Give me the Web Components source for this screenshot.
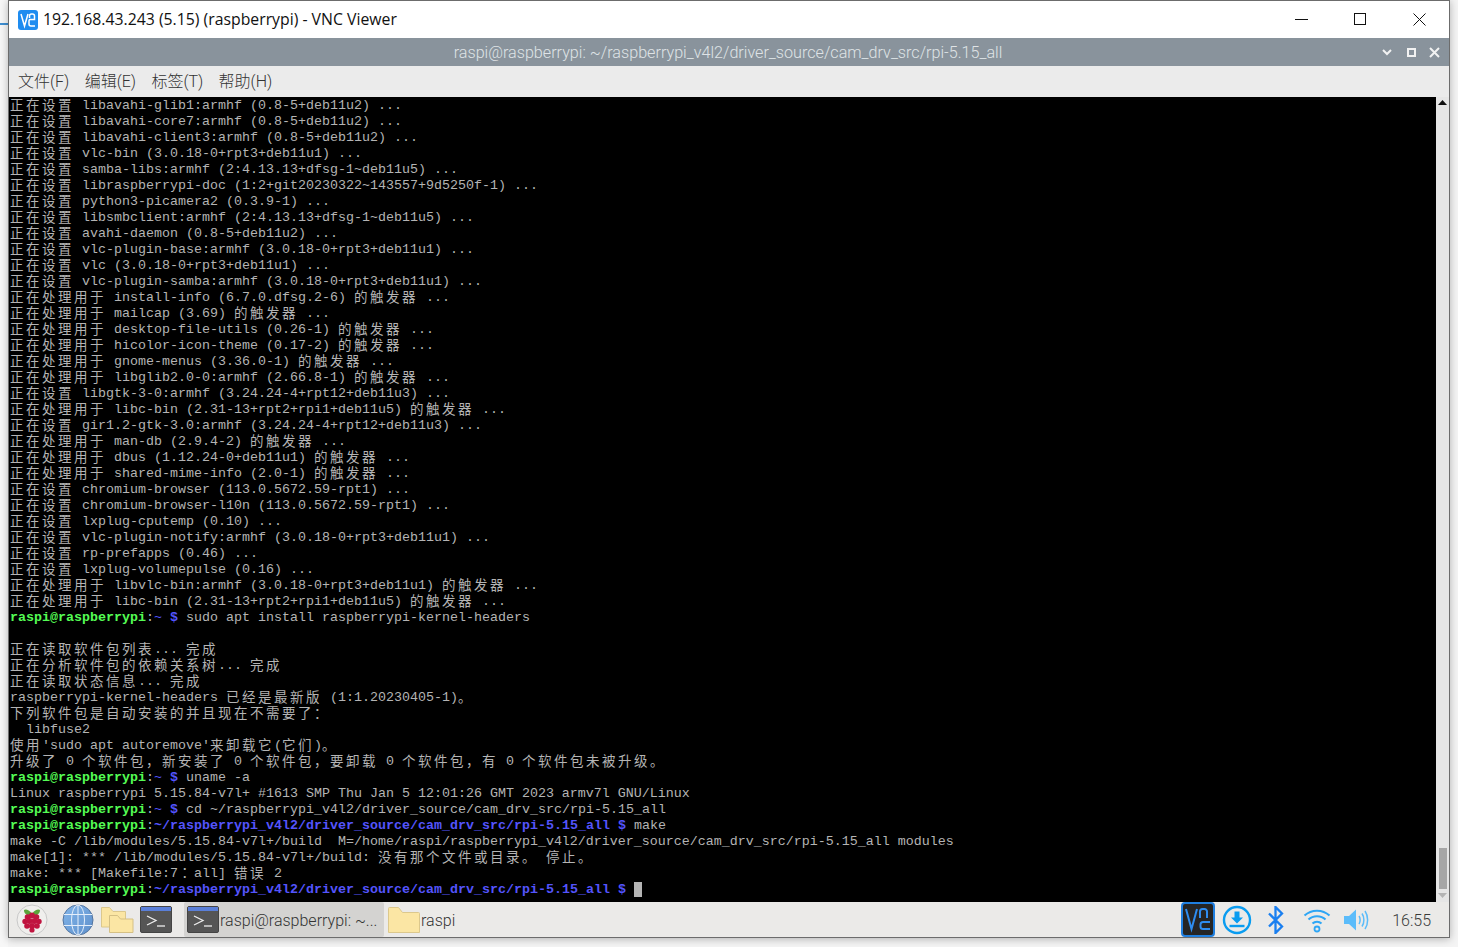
<!DOCTYPE html>
<html lang="zh">
<head>
<meta charset="utf-8">
<title>VNC Viewer</title>
<style>
  html, body { margin: 0; height: 947px; overflow: hidden; }
  html { background: #f4f4f4; }
  body {
    display: flex;
    background: linear-gradient(#f7f7f7 0 23px, #3f8fd2 23px 25px, #f7f7f7 25px) left top / 8px 100% no-repeat;
  }
</style>
</head>
<body>
<vnc-window>
  <vnc-titlebar slot="title">192.168.43.243 (5.15) (raspberrypi) - VNC Viewer</vnc-titlebar>
  <term-titlebar slot="title">raspi@raspberrypi: ~/raspberrypi_v4l2/driver_source/cam_drv_src/rpi-5.15_all</term-titlebar>
  <menu-bar slot="title"></menu-bar>
  <term-view></term-view>
  <task-bar slot="footer"></task-bar>
</vnc-window>

<script>
(function () {

  // svg shared by the panel, same icon shows up more than once
  const icons = {
    terminal: `<svg width="32" height="27" viewBox="0 0 32 27">
      <rect x=".5" y=".5" width="31" height="26" rx="1.5" fill="#555" stroke="#444"/>
      <rect x="1" y="1" width="30" height="4" fill="#5a7fd8"/>
      <path d="M7 10l9 4.5-9 4.500" fill="none" stroke="#eee" stroke-width="1.300"/>
      <path d="M17 20h8" stroke="#eee" stroke-width="1.300"/>
    </svg>`,
    folder: `<svg width="32" height="26" viewBox="0 0 32 26">
      <path d="M.5 25.500V1.500a1 1 0 0 1 1-1h9l4 5h16a1 1 0 0 1 1 1v19z" fill="#fbe6a4" stroke="#dcc88c"/>
    </svg>`,
    folders: `<svg width="33" height="27" viewBox="0 0 33 27">
      <path d="M.5 21V1.500h8l3.500 4h12.500V21z" fill="#fbe6a4" stroke="#dcc88c"/>
      <path d="M8.500 26.500V9.500h8l3 3.500h12.500v13.500z" fill="#fbe6a4" stroke="#d5c084"/>
    </svg>`,
    raspberry: `<svg width="32" height="32" viewBox="0 0 32 32">
      <circle cx="16" cy="16" r="15" fill="#f0efed" stroke="#c9c9c9"/>
      <path d="M16 10C13 5 9 5 8 6c0 4 3 6 8 5zM16 10c3-5 7-5 8-4 0 4-3 6-8 5z" fill="#5ca33a"/>
      <g fill="#c0143f">
        <circle cx="16" cy="11.500" r="3"/><circle cx="11.500" cy="13" r="2.800"/><circle cx="20.500" cy="13" r="2.800"/>
        <circle cx="9" cy="17.500" r="2.700"/><circle cx="23" cy="17.500" r="2.700"/><circle cx="13.500" cy="17" r="2.900"/>
        <circle cx="18.500" cy="17" r="2.900"/><circle cx="11" cy="22" r="2.800"/><circle cx="21" cy="22" r="2.800"/>
        <circle cx="16" cy="22" r="3"/><circle cx="16" cy="26" r="2.600"/>
      </g>
    </svg>`,
    globe: `<svg width="32" height="32" viewBox="0 0 32 32">
      <defs><linearGradient id="g" x1="0" y1="0" x2="1" y2="1"><stop offset="0" stop-color="#82b6ea"/><stop offset="1" stop-color="#5e8fcb"/></linearGradient></defs>
      <circle cx="16" cy="16" r="15" fill="url(#g)" stroke="#54759f"/>
      <g fill="none" stroke="#e4eefa" stroke-width="1">
        <ellipse cx="16" cy="16" rx="6.500" ry="15"/>
        <path d="M16 1v30M2 10.500h28M2 21.500h28"/>
      </g>
    </svg>`,
    vnc: `<svg width="34" height="35" viewBox="0 0 34 35">
      <rect x="1" y="1" width="32" height="33" rx="3" fill="#252525" stroke="#1f7fe0" stroke-width="2"/>
      <g fill="none" stroke="#2e8df0" stroke-width="2">
        <path d="M5 7l5.500 20L16 7"/>
        <path d="M19 16V9.500a2.500 2.500 0 0 1 2.500-2.500h2a2.500 2.500 0 0 1 2.500 2.500V16"/>
        <path d="M29 20h-7a2.500 2.500 0 0 0-2.500 2.500v2a2.500 2.500 0 0 0 2.500 2.500h7"/>
      </g>
    </svg>`,
    download: `<svg width="30" height="30" viewBox="0 0 30 30">
      <circle cx="15" cy="15" r="13" fill="none" stroke="#0a9cf0" stroke-width="2.400"/>
      <path d="M12.500 6.500h5v6h3.500L15 18.500 9 12.500h3.500z" fill="#0a9cf0"/>
      <path d="M7.500 21h15" stroke="#0a9cf0" stroke-width="2.400"/>
    </svg>`,
    bluetooth: `<svg width="18" height="28" viewBox="0 0 18 28">
      <path d="M2 7.500l13 13L8.500 27V1L15 7.500l-13 13" fill="none" stroke="#1a7ff0" stroke-width="2.300"/>
    </svg>`,
    wifi: `<svg width="28" height="26" viewBox="0 0 28 26">
      <g fill="none" stroke="#2ea6f5" stroke-width="2">
        <path d="M1.500 8.500c7-6.500 18-6.500 25 0"/>
        <path d="M5.500 12.500c4.500-4.500 12.500-4.500 17 0"/>
        <path d="M9.500 16.500c2.500-2.500 6.500-2.500 9 0"/>
        <circle cx="14" cy="22" r="2.500" stroke-width="1.800"/>
      </g>
    </svg>`,
    volume: `<svg width="28" height="26" viewBox="0 0 28 26">
      <path d="M1 9h5l7-6.500v21L6 17H1z" fill="#5bbcfa"/>
      <g fill="none" stroke="#5bbcfa" stroke-width="1.500">
        <path d="M16 9c1.500 2 1.500 6 0 8"/><path d="M19 6.500c2.500 3.500 2.500 9.500 0 13"/><path d="M22 4c3.500 5 3.500 13 0 18"/>
      </g>
    </svg>`
  };

  class VncWindow extends HTMLElement {
    constructor() {
      super();
      this.attachShadow({ mode: 'open' }).innerHTML = `
        <style>
          :host {
            display: flex;
            flex-direction: column;
            box-sizing: border-box;
            width: 1442px;
            height: 938px;
            margin-left: 8px;
            border: 1px solid #6c6c6c;
            background: #ebebeb;
            box-shadow: 0 1px 8px rgba(0,0,0,.28);
          }
          .main { flex: 1; min-height: 0; display: flex; }
        </style>
        <slot name="title"></slot>
        <div class="main"><slot></slot></div>
        <slot name="footer"></slot>`;
    }
  }

  class VncTitlebar extends HTMLElement {
    constructor() {
      super();
      this.attachShadow({ mode: 'open' }).innerHTML = `
        <style>
          :host {
            display: flex;
            align-items: center;
            height: 37px;
            background: #fff;
            color: #111;
            font: 15.800px "Open Sans", sans-serif;
          }
          .logo { margin: 0 5px 0 9px; display: flex; }
          .text { flex: 1; padding-bottom: 2px; }
          .btn { width: 59px; height: 37px; display: flex; align-items: center; justify-content: center; }
          .btn svg { display: block; }
          .btns { display: flex; }
        </style>
        <div class="logo">
          <svg width="20" height="20" viewBox="0 0 20 20">
            <rect width="20" height="20" rx="3" fill="#1e8cf0"/>
            <g fill="none" stroke="#fff" stroke-width="1.500">
              <path d="M3 4l3.500 12L10 4"/>
              <path d="M11.500 8V6a2 2 0 0 1 2-2h1a2 2 0 0 1 2 2v3.500h-4.500a1.500 1.500 0 0 0-1 1.500v3a2 2 0 0 0 2 2h4"/>
            </g>
          </svg>
        </div>
        <div class="text"><slot></slot></div>
        <div class="btns">
          <div class="btn"><svg width="13" height="13"><path d="M0 6.500h13" stroke="#111"/></svg></div>
          <div class="btn"><svg width="13" height="13"><rect x=".5" y=".5" width="11" height="11" fill="none" stroke="#111"/></svg></div>
          <div class="btn"><svg width="13" height="13"><path d="M.5 .5l12 12M12.500 .5l-12 12" stroke="#111"/></svg></div>
        </div>`;
    }
  }

  class TermTitlebar extends HTMLElement {
    constructor() {
      super();
      this.attachShadow({ mode: 'open' }).innerHTML = `
        <style>
          :host {
            display: flex;
            align-items: center;
            height: 28px;
            background: #89939c;
            color: #dfe3e6;
            font: 300 16.150px Roboto, sans-serif;
          }
          .text { flex: 1; text-align: center; padding-left: 65px; }
          .btns { display: flex; align-items: center; gap: 13px; margin-right: 9px; }
          .btns svg:first-child { margin-right: 2px; }
          svg { display: block; }
        </style>
        <div class="text"><slot></slot></div>
        <div class="btns">
          <svg width="10" height="8"><path d="M1 2l4 4 4-4" fill="none" stroke="#f2f2f2" stroke-width="2"/></svg>
          <svg width="9" height="9"><rect x="1" y="1" width="7" height="7" fill="none" stroke="#f2f2f2" stroke-width="2"/></svg>
          <svg width="11" height="11"><path d="M1 1l9 9M10 1l-9 9" stroke="#f2f2f2" stroke-width="2"/></svg>
        </div>`;
    }
  }

  class MenuBar extends HTMLElement {
    constructor() {
      super();
      const items = ['文件(F)', '编辑(E)', '标签(T)', '帮助(H)'];
      this.attachShadow({ mode: 'open' }).innerHTML = `
        <style>
          :host {
            display: flex;
            align-items: center;
            gap: 15.300px;
            box-sizing: border-box;
            height: 31px;
            padding: 0 0 4px 9px;
            background: #ebebeb;
            color: #333;
            font: 300 16px Roboto, "Noto Sans CJK SC", sans-serif;
          }
        </style>
        ${items.map(i => `<span>${i}</span>`).join('')}`;
    }
  }

  // 50 visible rows. objects are prompts: cwd then the command, null for the live cursor
  const p = (cwd, cmd) => ({ cwd, cmd });
  const setup = s => '正在设置 ' + s + ' ...';
  const trig = s => '正在处理用于 ' + s + ' 的触发器 ...';
  const drv = '~/raspberrypi_v4l2/driver_source/cam_drv_src/rpi-5.15_all';
  const rows = [
    setup('libavahi-glib1:armhf (0.8-5+deb11u2)'),
    setup('libavahi-core7:armhf (0.8-5+deb11u2)'),
    setup('libavahi-client3:armhf (0.8-5+deb11u2)'),
    setup('vlc-bin (3.0.18-0+rpt3+deb11u1)'),
    setup('samba-libs:armhf (2:4.13.13+dfsg-1~deb11u5)'),
    setup('libraspberrypi-doc (1:2+git20230322~143557+9d5250f-1)'),
    setup('python3-picamera2 (0.3.9-1)'),
    setup('libsmbclient:armhf (2:4.13.13+dfsg-1~deb11u5)'),
    setup('avahi-daemon (0.8-5+deb11u2)'),
    setup('vlc-plugin-base:armhf (3.0.18-0+rpt3+deb11u1)'),
    setup('vlc (3.0.18-0+rpt3+deb11u1)'),
    setup('vlc-plugin-samba:armhf (3.0.18-0+rpt3+deb11u1)'),
    trig('install-info (6.7.0.dfsg.2-6)'),
    trig('mailcap (3.69)'),
    trig('desktop-file-utils (0.26-1)'),
    trig('hicolor-icon-theme (0.17-2)'),
    trig('gnome-menus (3.36.0-1)'),
    trig('libglib2.0-0:armhf (2.66.8-1)'),
    setup('libgtk-3-0:armhf (3.24.24-4+rpt12+deb11u3)'),
    trig('libc-bin (2.31-13+rpt2+rpi1+deb11u5)'),
    setup('gir1.2-gtk-3.0:armhf (3.24.24-4+rpt12+deb11u3)'),
    trig('man-db (2.9.4-2)'),
    trig('dbus (1.12.24-0+deb11u1)'),
    trig('shared-mime-info (2.0-1)'),
    setup('chromium-browser (113.0.5672.59-rpt1)'),
    setup('chromium-browser-l10n (113.0.5672.59-rpt1)'),
    setup('lxplug-cputemp (0.10)'),
    setup('vlc-plugin-notify:armhf (3.0.18-0+rpt3+deb11u1)'),
    setup('rp-prefapps (0.46)'),
    setup('lxplug-volumepulse (0.16)'),
    trig('libvlc-bin:armhf (3.0.18-0+rpt3+deb11u1)'),
    trig('libc-bin (2.31-13+rpt2+rpi1+deb11u5)'),
    p('~', 'sudo apt install raspberrypi-kernel-headers'),
    '',
    '正在读取软件包列表... 完成',
    '正在分析软件包的依赖关系树... 完成',
    '正在读取状态信息... 完成',
    'raspberrypi-kernel-headers 已经是最新版 (1:1.20230405-1)。',
    '下列软件包是自动安装的并且现在不需要了：',
    '  libfuse2',
    "使用'sudo apt autoremove'来卸载它(它们)。",
    '升级了 0 个软件包，新安装了 0 个软件包，要卸载 0 个软件包，有 0 个软件包未被升级。',
    p('~', 'uname -a'),
    'Linux raspberrypi 5.15.84-v7l+ #1613 SMP Thu Jan 5 12:01:26 GMT 2023 armv7l GNU/Linux',
    p('~', 'cd ' + drv),
    p(drv, 'make'),
    'make -C /lib/modules/5.15.84-v7l+/build  M=/home/raspi/raspberrypi_v4l2/driver_source/cam_drv_src/rpi-5.15_all modules',
    'make[1]: *** /lib/modules/5.15.84-v7l+/build: 没有那个文件或目录。 停止。',
    'make: *** [Makefile:7：all] 错误 2',
    p(drv, null)
  ];

  // cjk cells are two columns wide, letter-spacing pads them out to 16px.
  // the reference has its ，and ：centred in the cell, which is the TC form
  const wide = s => s.replace(/[\u3000-\u9fff\uff00-\uffef]+/g, m => {
    const inner = m.replace(/[，：]/g, c => `<span class="t">${c}</span>`);
    return `<span class="w">${inner}</span>`;
  });

  class TermView extends HTMLElement {
    constructor() {
      super();
      const html = rows.map(r => {
        if (typeof r === 'string') return `<div class="r">${wide(r)}</div>`;
        const cmd = r.cmd === null ? '<span class="cur"> </span>' : r.cmd;
        const cwd = r.cwd === '~' ? '<span class="b">~</span>' : `<b class="b">${r.cwd}</b>`;
        return `<div class="r"><b class="g">raspi@raspberrypi</b>:${cwd} <b class="b">$</b> ${cmd}</div>`;
      }).join('');
      this.attachShadow({ mode: 'open' }).innerHTML = `
        <style>
          :host { display: flex; flex: 1; min-width: 0; background: #000; }
          .screen {
            flex: 1;
            padding: 1px 0 0 1px;
            color: #b4b4b4;
            font: 13.330px/16px "Liberation Mono", monospace;
            white-space: pre;
          }
          .r { height: 16px; }
          .w {
            display: inline-block;
            vertical-align: top;
            height: 16px;
            font: 13.500px/12px "Noto Sans CJK SC", sans-serif;
            letter-spacing: 2.500px;
          }
          .t { font-family: "Noto Sans CJK TC", sans-serif; }
          .g { color: #54fc54; }
          .b { color: #5454fc; }
          .cur { display: inline-block; width: 8px; height: 15px; background: #b4b4b4; vertical-align: top; }
        </style>
        <div class="screen">${html}</div>
        <scroll-bar></scroll-bar>`;
    }
  }

  class ScrollBar extends HTMLElement {
    constructor() {
      super();
      this.attachShadow({ mode: 'open' }).innerHTML = `
        <style>
          :host {
            display: flex;
            flex-direction: column;
            align-items: center;
            width: 13px;
            background: #e6e6e6;
          }
          .thumb { width: 8px; height: 41px; margin-top: auto; margin-bottom: 4px; background: #a6a6a6; }
          svg { display: block; }
        </style>
        <svg style="margin-top:3px" width="9" height="6"><path d="M4.500 0L9 5H0z" fill="#111"/></svg>
        <div class="thumb"></div>
        <svg style="margin-bottom:3px" width="9" height="6"><path d="M0 0h9L4.500 5z" fill="#b4b4b4"/></svg>`;
    }
  }

  class TaskItem extends HTMLElement {
    constructor() {
      super();
      this.attachShadow({ mode: 'open' }).innerHTML = `
        <style>
          :host {
            display: flex;
            align-items: center;
            height: 35px;
            padding-left: 3px;
            gap: 1px;
            box-sizing: border-box;
            color: #333;
            font: 300 16px Roboto, sans-serif;
            white-space: nowrap;
          }
          :host([active]) { background: #d4d3d1; border-radius: 2px; }
          .ic { display: flex; }
          .lbl { padding-top: 2px; }
        </style>
        <span class="ic"><slot name="icon"></slot></span>
        <span class="lbl"><slot></slot></span>`;
    }
  }

  class TaskBar extends HTMLElement {
    constructor() {
      super();
      this.attachShadow({ mode: 'open' }).innerHTML = `
        <style>
          :host {
            display: flex;
            align-items: center;
            height: 35px;
            background: #ebeae8;
            color: #333;
            font: 300 16px Roboto, sans-serif;
          }
          .launch { display: flex; align-items: center; margin-left: 7px; }
          .launch span { display: flex; }
          .tray { display: flex; align-items: center; margin-left: auto; }
          .tray span { display: flex; justify-content: center; }
          svg { display: block; }
          .clock { margin: 0 18px 0 21px; padding-top: 2px; color: #3a3a3a; }
        </style>
        <div class="launch">
          <span style="margin-right:14px">${icons.raspberry}</span>
          <span style="margin-right:7px">${icons.globe}</span>
          <span style="margin-right:6px">${icons.folders}</span>
          <span style="margin-right:12px">${icons.terminal}</span>
        </div>
        <task-item active style="width:200px"><span slot="icon">${icons.terminal}</span>raspi@raspberrypi: ~...</task-item>
        <task-item style="margin-left:1px"><span slot="icon">${icons.folder}</span>raspi</task-item>
        <div class="tray">
          <span>${icons.vnc}</span>
          <span style="margin-left:7px">${icons.download}</span>
          <span style="margin-left:15px">${icons.bluetooth}</span>
          <span style="margin-left:18px">${icons.wifi}</span>
          <span style="margin-left:12px">${icons.volume}</span>
          <div class="clock">16:55</div>
        </div>`;
    }
  }

  customElements.define('vnc-window', VncWindow);
  customElements.define('vnc-titlebar', VncTitlebar);
  customElements.define('term-titlebar', TermTitlebar);
  customElements.define('menu-bar', MenuBar);
  customElements.define('scroll-bar', ScrollBar);
  customElements.define('term-view', TermView);
  customElements.define('task-item', TaskItem);
  customElements.define('task-bar', TaskBar);

})();
</script>
</body>
</html>
